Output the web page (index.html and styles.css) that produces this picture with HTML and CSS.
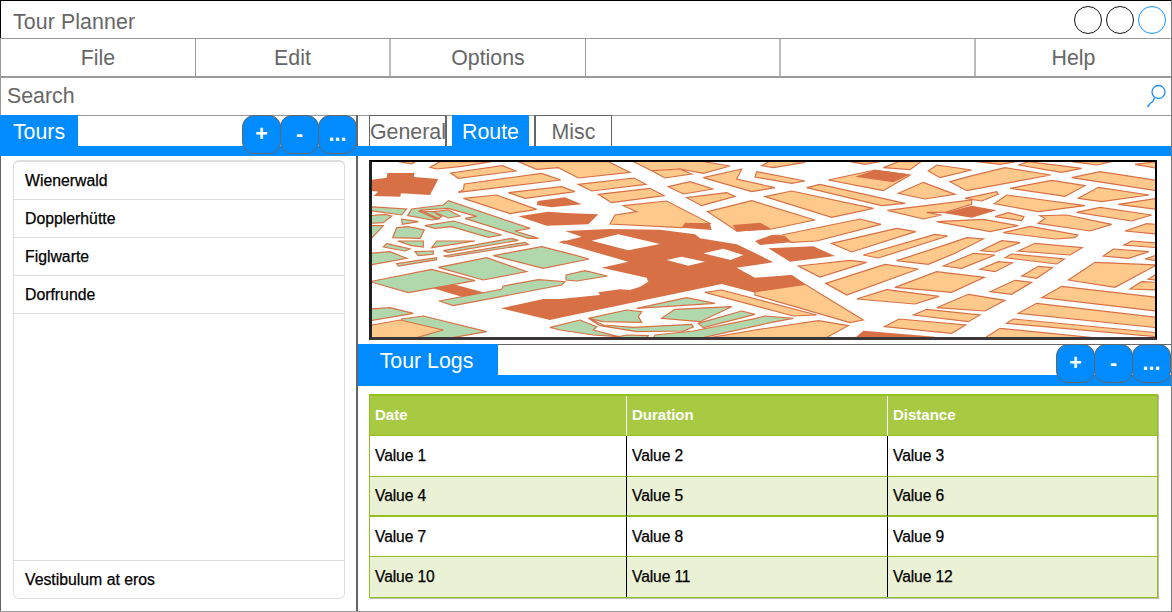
FILE: index.html
```
<!DOCTYPE html>
<html lang="en">
<head>
<meta charset="utf-8">
<title>Tour Planner</title>
<link rel="stylesheet" href="styles.css">
</head>
<body>
<div class="window">
  <header class="titlebar">
    <span class="title">Tour Planner</span>
    <span class="controls"><i class="dot"></i><i class="dot"></i><i class="dot dot-blue"></i></span>
  </header>
  <nav class="menu">
    <span>File</span><span>Edit</span><span>Options</span><span></span><span></span><span>Help</span>
  </nav>
  <div class="search">
    <span>Search</span>
    <svg class="lens" width="20" height="24" viewBox="0 0 20 24"><circle cx="12.5" cy="8" r="6.5"/><path d="M8.500 13.500 7 17.500 4.500 19 1.500 23"/></svg>
  </div>
  <main class="content">
    <section class="side">
      <div class="head">
        <span class="tab tab-tours">Tours</span>
        <div class="buttons"><b>+</b><b>-</b><b>...</b></div>
      </div>
      <ul class="tours">
        <li>Wienerwald</li><li>Dopplerhütte</li><li>Figlwarte</li><li>Dorfrunde</li>
        <li class="space"></li>
        <li class="last">Vestibulum at eros</li>
      </ul>
    </section>
    <section class="detail">
      <div class="head head-tabs">
        <span class="tab-line general">General</span><span class="tab route">Route</span><span class="tab-line misc">Misc</span>
      </div>
      <div class="map-area">
        <svg class="map" width="788" height="180" viewBox="372 162 783 175">
          <g transform="translate(365 155) scale(.33333)">
            <g class="land">
              <path d="M100 20H152L140 27ZM195 37 225 20H380L290 34 215 42ZM460 20 515 43 580 38 640 69 795 52 730 20ZM257 54 412 32 452 48 280 70ZM298 87 530 55 587 75 280 112 295 104ZM430 113 590 95 630 110 480 130ZM295 130 395 120 515 163 435 176Z"/>
            </g>
            <g class="built">
              <path d="M15 75 65 68 67 54H148L147 66 220 72 195 120 108 115 106 125 25 123 40 110 15 107ZM515 150 518 138 600 127 650 148 560 157ZM460 184 550 170 600 174 700 178 670 208 545 212ZM205 400 265 388 355 412 320 425 290 425ZM580 262 600 256V267Z"/>
            </g>
            <g class="park">
              <path d="M15 155 125 162 110 180 15 167ZM15 182 60 178 80 183 55 203 15 205ZM15 212H55L15 255ZM110 192 160 200 112 208ZM95 218 130 215 178 225 165 250 83 248ZM128 182 140 162 235 150 250 137 495 220 450 228 520 250 490 250 330 200 300 190 335 184 250 160 165 165 222 192 200 195ZM160 168 205 170 230 185 215 192ZM205 170 250 165 285 183 250 189ZM180 212 265 198 410 240 370 247 260 215 210 220ZM98 258H175V276L140 272ZM215 258H330L200 278ZM65 266 135 282 120 288 55 276ZM150 290 205 288V298L160 302ZM95 326 215 308V314L100 333ZM235 287 440 250 460 256 250 292ZM235 303 480 262 490 268 250 306ZM15 295 75 290 125 310 15 330ZM385 302 530 275 610 295 672 312 535 340ZM220 337 365 308 485 350 355 375ZM15 380 200 343 330 377 130 413ZM222 438 410 403 415 393 520 374 600 380 590 390 265 452ZM15 462 75 458 145 475 15 497ZM110 492 175 483 365 530 250 550H130Z"/>
            </g>
            <path class="land" d="M10 512 105 495 235 525 130 555H10Z"/>
          </g>
          <g transform="translate(560 155) scale(.33333)">
            <path class="land" d="M210 15H400L510 33 430 55 360 42 275 47ZM275 47 360 42 395 57 315 69ZM55 88 222 69 258 88 95 108ZM115 118 270 100 312 122 155 143ZM190 152 320 138 450 205 365 218 150 207 165 180 230 170ZM325 95 390 80 460 102 370 117ZM380 128 500 113 525 124 425 152ZM430 68 545 42 530 72 645 98 575 110ZM443 170 575 137 765 195 635 222 530 228Z"/>
            <path class="built" d="M375 203 450 205 455 225 365 218ZM518 210 600 203 635 222 530 230ZM15 228 150 222 300 224 405 238 420 250 530 268 585 294 640 322 530 338 585 368 695 360 735 388 585 413 485 387 0 488-30 495-177 460-50 432H0L120 420 115 412 180 403 210 405 240 395 265 380 260 368 125 338 205 320 0 262 65 245Z"/>
            <path class="road" d="M95 257 175 238 300 267 205 286ZM430 295 490 281 550 300 512 315ZM320 315 365 305 435 320 385 332Z"/>
            <path class="land" d="M435 412 485 405 770 480 700 483Z"/>
            <path class="park" d="M18 360 75 347 142 363 50 378 18 375ZM230 460 380 428 465 445ZM305 490 345 463 515 455 420 500ZM85 490 200 465 245 470 235 485 245 502 130 500ZM-30 517 60 495 110 515 100 525 175 545 100 540 0 525ZM85 490 130 510 220 517 395 508 400 516 370 528 230 530 120 512ZM415 505 545 468 585 478 430 518ZM285 540 400 528 585 491 615 483 700 490 635 502 420 550H280ZM150 550 200 540 265 542 255 555Z"/>
            <path class="land" d="M420 553 585 525 775 497 865 512 790 553Z"/>
          </g>
          <g transform="translate(755 155) scale(.33333)">
            <path class="land" d="M20 32 50 15 150 22 55 38ZM5 50 150 78 110 85 0 66ZM285 20H375L330 28ZM385 38 430 20H498L465 44ZM220 75 360 45 465 60 385 107ZM155 98 195 88 450 145 380 152ZM30 125 110 108 355 160 230 187ZM430 115 505 82 600 118 510 132ZM397 166 650 135 650 148 570 172 515 172 560 180 505 192ZM50 242 80 240 315 192 378 208 185 258 110 262ZM230 265 425 220 482 230 290 291ZM325 300 540 238 578 243 370 309ZM425 317 585 265 635 248 685 252 600 295 520 328ZM130 333 285 316 335 322 195 366ZM212 385 390 328 490 342 275 420ZM565 333 655 295 720 300 620 340ZM420 397 545 350 688 367 590 412ZM305 432 395 404 552 424 480 447ZM545 458 640 418 750 436 690 468ZM475 480 515 463 675 480 640 500ZM388 515 432 492 632 510 590 535ZM0 410 150 388 325 495 285 503 0 420Z"/>
            <path class="land" d="M520 48 545 30 650 45 555 68Z"/>
            <path class="built" d="M300 65 360 45 465 58 415 82ZM0 258 50 240 90 243 110 262 15 270ZM40 280 175 274 240 303 105 320ZM565 174 650 152 725 166 650 188ZM295 553 325 527 540 545V553ZM0 410V372L110 360 152 388Z"/>
          </g>
          <g transform="translate(950 155) scale(.33333)">
            <path class="land" d="M0 80 55 65 165 38 302 60 50 107ZM80 20H200L150 28ZM205 30 235 20 395 40 335 52ZM365 20H485L440 30ZM365 68 450 50 620 76V107ZM555 28 620 20V40ZM180 100 305 76 405 92 345 124ZM45 130 140 110 145 118 95 138ZM133 146 170 120 405 152 265 170ZM385 130 445 97 597 120 455 140ZM505 148 620 130V163ZM380 172 450 157 605 180 545 198ZM135 185 175 173 222 185 215 197ZM-40 200 100 193 205 212 120 230ZM265 205 285 190 270 182 350 180 485 208 420 228ZM160 233 240 214 383 240 375 248 315 252ZM525 228 590 206 620 208V237ZM92 287 155 257 210 263 135 291ZM205 288 255 265 397 278 360 300ZM165 308 185 297 343 312 320 327ZM90 343 145 320 187 324 135 350ZM215 363 265 334 307 338 260 370ZM120 410 195 376 245 382 185 418ZM355 375 435 322 620 330 495 397ZM460 303 490 282 597 290 535 310ZM522 270 545 258 620 264V278ZM585 312 620 300V317ZM540 402 575 380 620 382V405ZM595 373 620 357V375ZM275 428 335 394 620 427V468ZM205 475 260 445 620 487V518ZM170 505 190 492 620 533V545ZM110 545 150 520 450 550H110Z"/>
          </g>
        </svg>
      </div>
      <div class="head head-logs">
        <span class="tab tab-logs">Tour Logs</span>
        <div class="buttons"><b>+</b><b>-</b><b>...</b></div>
      </div>
      <table class="logs">
        <thead><tr><th>Date</th><th>Duration</th><th>Distance</th></tr></thead>
        <tbody>
          <tr><td>Value 1</td><td>Value 2</td><td>Value 3</td></tr>
          <tr><td>Value 4</td><td>Value 5</td><td>Value 6</td></tr>
          <tr><td>Value 7</td><td>Value 8</td><td>Value 9</td></tr>
          <tr><td>Value 10</td><td>Value 11</td><td>Value 12</td></tr>
        </tbody>
      </table>
    </section>
  </main>
</div>
</body>
</html>
```
FILE: styles.css
```
* { box-sizing: border-box; }

body {
  margin: 0;
  background: #fff;
  color: #666;
  font: 21.33px/24px "Liberation Sans", Arial, sans-serif;
}

.window {
  width: 1172px;
  height: 612px;
  overflow: hidden;
  display: flex;
  flex-direction: column;
  border-right: 1px solid #777;
  border-bottom: 1px solid #999;
}

.titlebar {
  height: 38px;
  flex: none;
  display: flex;
  justify-content: space-between;
  padding: 9px 5px 0 12px;
  border-top: 1px solid #000;
  border-left: 1px solid #000;
}

.title { letter-spacing: .1px; }

.controls {
  display: flex;
  gap: 4px;
  margin-top: -4px;
}

.dot {
  width: 28px;
  height: 28px;
  border: 1.5px solid #111;
  border-radius: 50%;
}

.dot-blue { border-color: #1890ff; }

.menu {
  height: 40px;
  flex: none;
  display: grid;
  grid-template-columns: 195px 195px 195px 195px 195px 195px;
  border-top: 1px solid #999;
  border-bottom: 2px solid #999;
  border-left: 1px solid #999;
}

.menu span {
  padding-top: 7px;
  text-align: center;
  border-right: 1px solid #999;
}

.menu span:nth-child(2),
.menu span:nth-child(5),
.menu span:nth-child(4) { border-right: 2px solid #bbb; }

.menu span:last-child { border: 0; }

.search {
  height: 38px;
  flex: none;
  display: flex;
  justify-content: space-between;
  padding: 6px 5px 0 6px;
  border-left: 1px solid #999;
  border-bottom: 1px solid #999;
}

.lens {
  fill: none;
  stroke: #1890ff;
  stroke-width: 1.3;
}

.content {
  flex: 1;
  display: flex;
  margin-top: -1px;
}

.side {
  width: 358px;
  border-left: 1px solid #666;
  border-right: 2px solid #666;
}

.detail { flex: 1; }

.head {
  height: 41px;
  display: flex;
  justify-content: space-between;
  box-shadow: inset 0 -10px #008cff;
}

.side .head { margin: 0 -2px 0 -1px; }

.tab {
  height: 31px;
  background: #008cff;
  color: #fff;
  text-align: center;
  padding-top: 5px;
}

.tab-tours { width: 78px; }

.buttons {
  display: flex;
  color: #fff;
}

.buttons b {
  width: 39px;
  height: 39px;
  margin-right: -1px;
  padding-top: 6px;
  text-align: center;
  background: #008cff;
  border: 1px solid #666;
  border-radius: 12px;
}

.side .buttons { margin-right: 2px; }

.tours {
  height: 439px;
  width: 332px;
  margin: 4px 0 0 12px;
  padding: 0;
  list-style: none;
  display: flex;
  flex-direction: column;
  border: 1px solid #ddd;
  border-top-width: 2px;
  border-radius: 6px;
  color: #000;
  font-size: 15.8px;
  line-height: 18px;
  -webkit-text-stroke: .25px;
}

.tours li {
  height: 38px;
  padding: 10px 11px;
  border-bottom: 1px solid #ddd;
}

.tours .space { flex: 1; }

.tours .last {
  height: 37px;
  border: 0;
}

.head-tabs {
  justify-content: flex-start;
  padding-left: 11px;
}

.tab-line {
  height: 31px;
  padding-top: 4px;
  border: 1px solid #666;
  border-bottom: 0;
  text-align: center;
}

.general {
  width: 78px;
  border-right-width: 2px;
}

.route {
  width: 77px;
  margin: 0 5px;
}

.misc {
  width: 78px;
  border-left-width: 2px;
}

.map-area {
  height: 188px;
  padding: 4px 0 0 11px;
}

.map {
  display: block;
  border: 2px solid #000;
  border-left: 3px solid #222;
  border-bottom: 3px solid #3c3638;
}

.land { fill: #ffc98b; stroke: #d87045; stroke-width: 3.5; }
.built { fill: #d87045; }
.park { fill: #b1d8ad; stroke: #d87045; stroke-width: 3.5; }
.road { fill: #fff; }

.head-logs {
  height: 42px;
  border-top: 1px solid #666;
  box-shadow: inset 0 -11px #008cff;
}

.tab-logs {
  width: 140px;
  margin-top: -1px;
  padding-right: 3px;
}

.head-logs .buttons {
  margin-top: -1px;
  margin-right: 1px;
}

.logs {
  width: 789px;
  height: 204px;
  margin: 8px 0 0 11px;
  table-layout: fixed;
  border-spacing: 0;
  border: 1px solid #94c120;
  border-top-width: 2px;
  box-shadow: 1px 1px #bbb;
  color: #000;
  font-size: 15.6px;
  line-height: 18px;
  letter-spacing: -.1px;
}

.logs th,
.logs td {
  height: 40px;
  padding: 0 5px;
  text-align: left;
  border-bottom: 1px solid #94c120;
  border-right: 1px solid #000;
}

.logs td { -webkit-text-stroke: .25px; }

.logs th {
  padding-bottom: 2px;
  background: #a7ca42;
  color: #fff;
  font-size: 15px;
  letter-spacing: 0;
  border-right-color: #fff;
}

.logs th:nth-child(1) { width: 257px; }
.logs th:nth-child(2) { width: 261px; }
.logs th:last-child,
.logs td:last-child { border-right: 0; }
.logs tbody tr:nth-child(even) { background: #eaf1d5; }
.logs tbody tr:nth-child(1) td { height: 41px; }
.logs tbody tr:nth-child(2) td { border-bottom-width: 2px; }
.logs tbody tr:last-child td { border-bottom: 0; }
```
